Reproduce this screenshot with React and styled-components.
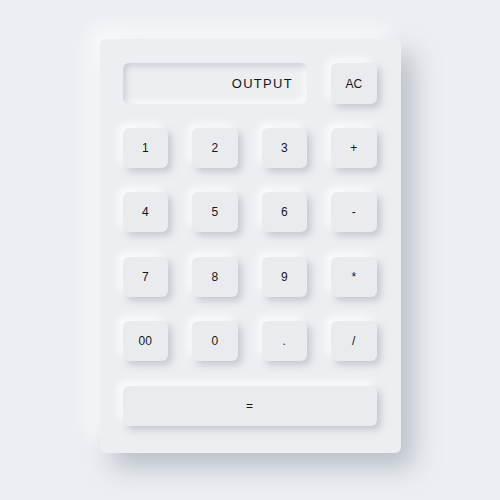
import React from "react";
import styled, { createGlobalStyle } from "styled-components";

const GlobalStyle = createGlobalStyle`
  html, body {
    margin: 0;
    padding: 0;
    background: #ebeef2;
    font-family: "Liberation Sans", Arial, sans-serif;
  }
`;

const Page = styled.div`
  width: 500px;
  height: 500px;
  display: flex;
  justify-content: center;
  padding-top: 39px;
  box-sizing: border-box;
`;

const Calculator = styled.div`
  width: 301px;
  height: 414px;
  box-sizing: border-box;
  padding: 24px 24px 26px 23px;
  background: #eceef1;
  border-radius: 6px;
  box-shadow: 12px 14px 26px rgba(140, 145, 155, 0.5),
    -10px -10px 22px rgba(255, 255, 255, 0.9);
`;

const Keys = styled.div`
  display: grid;
  grid-template-columns: repeat(4, 1fr);
  grid-auto-rows: 40px;
  column-gap: 24px;
  row-gap: 24.5px;
  width: 254px;
`;

const Display = styled.div`
  grid-column: span 3;
  height: 41px;
  display: flex;
  align-items: center;
  justify-content: flex-end;
  padding-right: 14px;
  border-radius: 6px;
  background: #eceef1;
  color: #15171c;
  font-size: 13px;
  letter-spacing: 1.3px;
  box-shadow: inset 3px 3px 6px rgba(170, 175, 185, 0.5),
    inset -3px -3px 6px rgba(255, 255, 255, 0.95);
`;

const Key = styled.button`
  grid-column: ${(p) => (p.$wide ? "1 / -1" : "auto")};
  height: ${(p) => (p.$tall ? "41px" : "40px")};
  border: none;
  border-radius: 6px;
  background: #e9ebee;
  color: #15171c;
  font-family: "Liberation Sans", Arial, sans-serif;
  font-size: 12px;
  padding: 0;
  cursor: pointer;
  box-shadow: 4px 4px 7px rgba(160, 165, 175, 0.5),
    -4px -4px 8px rgba(255, 255, 255, 0.95);
`;

const rows = [
  ["1", "2", "3", "+"],
  ["4", "5", "6", "-"],
  ["7", "8", "9", "*"],
  ["00", "0", ".", "/"],
];

const App = () => {
  return (
    <>
      <GlobalStyle />
      <Page>
        <Calculator>
          <Keys>
            <Display>OUTPUT</Display>
            <Key $tall>AC</Key>
            {rows.flat().map((k) => (
              <Key key={k}>{k}</Key>
            ))}
            <Key $wide>=</Key>
          </Keys>
        </Calculator>
      </Page>
    </>
  );
};

export default App;
